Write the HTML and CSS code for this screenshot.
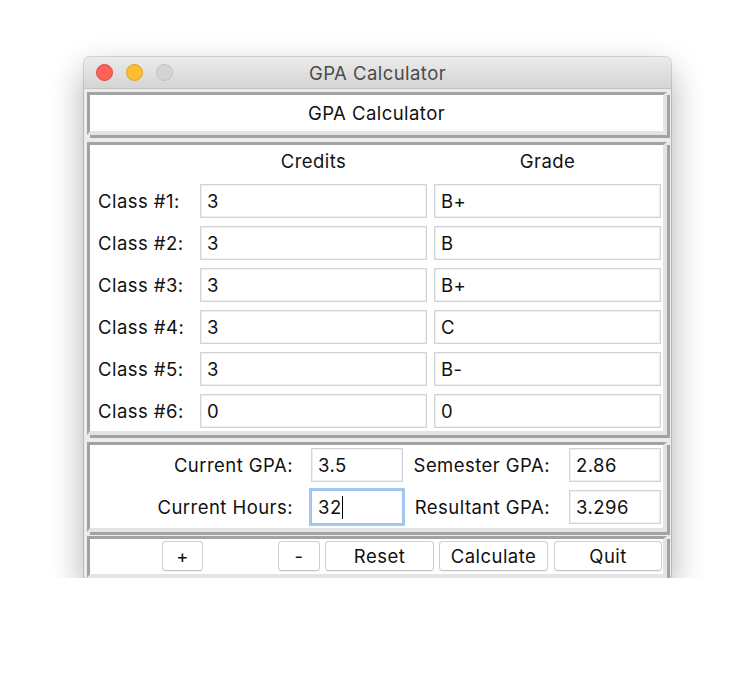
FILE: index.html
```html
<!DOCTYPE html>
<html>
<head>
<meta charset="utf-8">
<title>GPA Calculator</title>
<link rel="stylesheet" href="styles.css">
</head>
<body>
<div class="window">
  <div class="titlebar">
    <div class="lights">
      <span class="light red"></span>
      <span class="light yellow"></span>
      <span class="light gray"></span>
    </div>
    <div class="title">GPA Calculator</div>
  </div>
  <div class="content">
    <div class="frame f-title">GPA Calculator</div>
    <div class="frame f-classes">
      <div class="cell"></div>
      <div class="cell head">Credits</div>
      <div class="cell head">Grade</div>

      <div class="cell label">Class #1:</div>
      <div class="entry">3</div>
      <div class="entry">B+</div>

      <div class="cell label">Class #2:</div>
      <div class="entry">3</div>
      <div class="entry">B</div>

      <div class="cell label">Class #3:</div>
      <div class="entry">3</div>
      <div class="entry">B+</div>

      <div class="cell label">Class #4:</div>
      <div class="entry">3</div>
      <div class="entry">C</div>

      <div class="cell label">Class #5:</div>
      <div class="entry">3</div>
      <div class="entry">B-</div>

      <div class="cell label">Class #6:</div>
      <div class="entry">0</div>
      <div class="entry">0</div>
    </div>
    <div class="frame f-gpa">
      <div class="cell rlabel">Current GPA:</div>
      <div class="entry">3.5</div>
      <div class="cell rlabel r2">Semester GPA:</div>
      <div class="entry">2.86</div>

      <div class="cell rlabel">Current Hours:</div>
      <div class="entry focused"><span class="caret">32</span></div>
      <div class="cell rlabel r2">Resultant GPA:</div>
      <div class="entry">3.296</div>
    </div>
    <div class="frame f-buttons">
      <div class="btn plus">+</div>
      <div class="btn small">-</div>
      <div class="btn wide">Reset</div>
      <div class="btn wide">Calculate</div>
      <div class="btn wide quit">Quit</div>
    </div>
  </div>
</div>
</body>
</html>
```
FILE: styles.css
```css
html, body {
  margin: 0;
  padding: 0;
  background: #ffffff;
}

body {
  padding: 57px 0 0 84px;
  font-family: "Inter", "Liberation Sans", sans-serif;
  font-size: 18.5px;
  letter-spacing: 0.45px;
  color: #111111;
}

.window {
  width: 587px;
  height: 521px;
  box-sizing: border-box;
  background: #ececec;
  border-radius: 6px 6px 3px 3px;
  box-shadow: 0 14px 34px rgba(0, 0, 0, 0.33), 0 0 0 1px rgba(0, 0, 0, 0.14);
  overflow: hidden;
  display: flex;
  flex-direction: column;
}

.titlebar {
  flex: 0 0 32px;
  height: 32px;
  box-sizing: border-box;
  border-bottom: 1px solid #c2c2c2;
  background: linear-gradient(#ebebeb, #d5d5d5);
  display: grid;
  align-items: center;
}

.lights,
.title {
  grid-row: 1;
  grid-column: 1;
}

.lights {
  display: flex;
  gap: 13px;
  padding-left: 12px;
  justify-self: start;
}

.light {
  width: 17px;
  height: 17px;
  border-radius: 50%;
  box-sizing: border-box;
}

.red {
  background: #fe5f57;
  border: 1px solid #e1463f;
}

.yellow {
  background: #febc2e;
  border: 1px solid #dea024;
}

.gray {
  background: #d3d3d3;
  border: 1px solid #c1c1c1;
}

.title {
  justify-self: center;
  color: #4b4b4b;
}

.content {
  flex: 0 0 auto;
  padding: 3px 0 0 3px;
}

.frame {
  width: 580px;
  box-sizing: border-box;
  background: #ffffff;
  border-style: solid;
  border-width: 3px 4px 4px 3px;
  border-color: #a2a2a2 #e4e4e4 #e4e4e4 #a2a2a2;
  box-shadow: 3px 3px 0 #a2a2a2;
  margin-bottom: 7px;
}

.f-title {
  height: 43px;
  display: flex;
  align-items: center;
  justify-content: center;
}

.f-classes {
  height: 293px;
  display: grid;
  grid-template-columns: 103px 227px 227px;
  grid-template-rows: 31px repeat(6, 34px);
  column-gap: 7px;
  row-gap: 8px;
}

.cell {
  display: flex;
  align-items: center;
  white-space: nowrap;
}

.head {
  justify-content: center;
}

.label {
  padding-left: 8px;
}

.entry {
  box-sizing: border-box;
  height: 34px;
  border: 1px solid #d3d3d3;
  box-shadow: inset 0 0 0 1px #efefef;
  background: #ffffff;
  display: flex;
  align-items: center;
  padding-left: 6px;
}

.f-classes .entry {
  padding-left: 6px;
}

.f-gpa {
  height: 90px;
  margin-bottom: 4px;
  padding-top: 3px;
  display: grid;
  grid-template-columns: 221px 92px 166px 92px;
  grid-template-rows: 34px 34px;
  row-gap: 8px;
}

.rlabel {
  justify-content: flex-end;
  padding-right: 18px;
}

.rlabel.r2 {
  padding-right: 19px;
}

.focused {
  box-shadow: 0 0 0 2px #a3c8f5;
  border-color: #9fc2ec;
}

.caret {
  border-right: 1px solid #000000;
  padding-right: 0;
  letter-spacing: 0.45px;
  line-height: 23px;
}

.f-buttons {
  height: 42px;
  margin-bottom: 0;
  padding: 2px 0 0 72px;
  display: flex;
  align-items: flex-start;
  gap: 5px;
}

.btn {
  box-sizing: border-box;
  height: 30px;
  background: #ffffff;
  border: 1px solid #d0d0d0;
  border-bottom-color: #c4c4c4;
  border-radius: 4px;
  box-shadow: 0 0.5px 1px rgba(0, 0, 0, 0.06);
  display: flex;
  align-items: center;
  justify-content: center;
}

.plus {
  width: 41px;
  margin-right: 70px;
}

.small {
  width: 42px;
}

.wide {
  width: 109px;
}

.quit {
  width: 108px;
  margin-left: 1px;
}
```
